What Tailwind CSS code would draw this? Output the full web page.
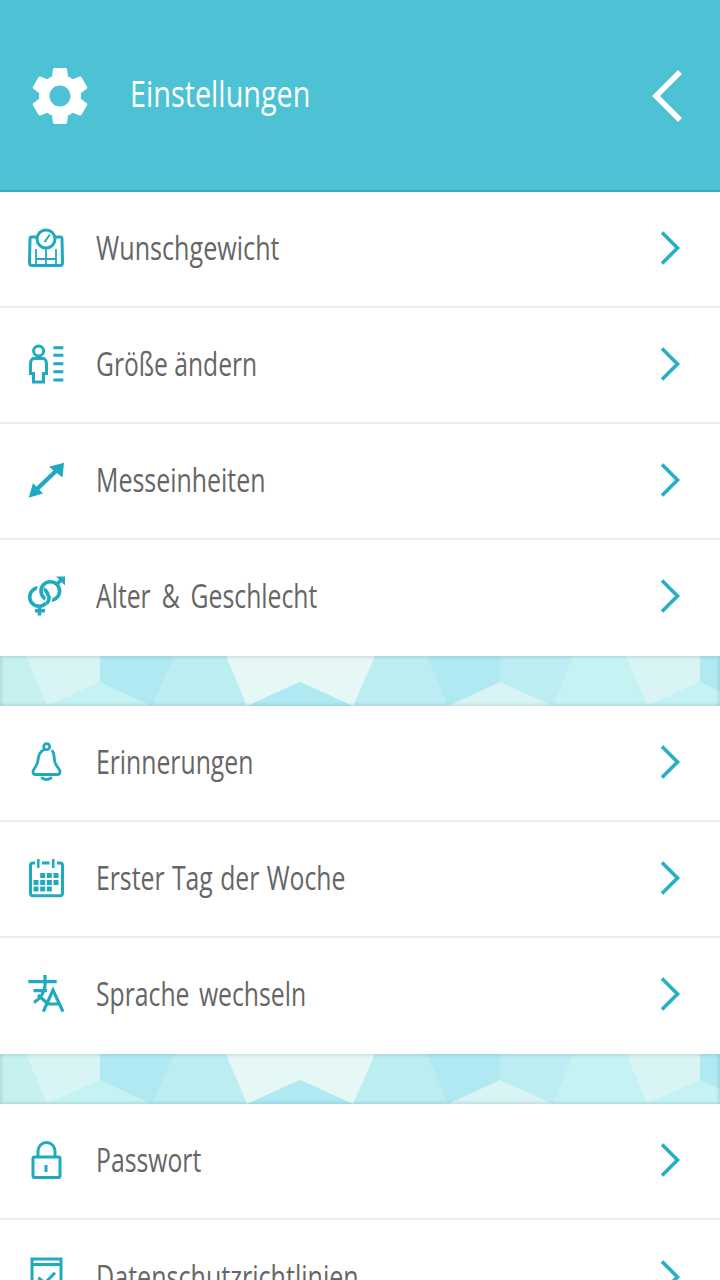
<!doctype html>
<html><head><meta charset="utf-8"><script src="https://cdn.jsdelivr.net/npm/@tailwindcss/browser@4"></script></head>
<body>
<svg class="hidden" xmlns="http://www.w3.org/2000/svg">
<symbol id="chev" viewBox="0 0 32 48"><path d="M12 8.500 L27.500 24 L12 39.500" fill="none" stroke="#25b0c6" stroke-width="3.600"/></symbol>
<symbol id="band" viewBox="0 0 720 50">
<rect width="720" height="50" fill="#bcedf2"/>
<polygon points="0,0 26,0 47,50 0,50" fill="#c5f1f1"/>
<polygon points="26,0 100,0 100,26 47,50" fill="#d9f4f4"/>
<polygon points="47,50 100,26 152,50" fill="#c5f2f2"/>
<polygon points="100,0 174,0 152,50 100,26" fill="#b0e9f2"/>
<polygon points="226,0 375,0 353,50 300,26 247,50" fill="#e5f8f5"/>
<polygon points="247,50 300,26 353,50" fill="#b0e9f2"/>
<polygon points="427,0 500,0 500,26 448,50" fill="#b0e9f2"/>
<polygon points="448,50 500,26 553,50" fill="#d9f4f4"/>
<polygon points="573,0 626,0 647,50 553,50" fill="#c5f2f2"/>
<polygon points="626,0 700,0 700,26 647,50" fill="#d9f4f4"/>
<polygon points="647,50 700,26 720,35 720,50" fill="#c5f2f2"/>
<polygon points="700,0 720,0 720,35 700,26" fill="#b0e9f2"/>
</symbol>
</svg>
<div class="w-[720px] h-[1280px] overflow-hidden bg-white font-['Open_Sans',sans-serif]">
<header class="h-[192px] bg-[#4dc2d5] border-b-2 border-[#3fa9b8] pt-[2px] flex items-center pl-[25px] pr-[35px] text-white">
<svg class="w-[70px] h-[70px]" viewBox="0 0 24 24" fill="#fff"><path d="M19.14 12.94c.04-.3.06-.61.06-.94 0-.32-.02-.64-.07-.94l2.03-1.58c.18-.14.23-.41.12-.61l-1.92-3.32c-.12-.22-.37-.29-.59-.22l-2.39.96c-.5-.38-1.03-.7-1.62-.94l-.36-2.54c-.04-.24-.24-.41-.48-.41h-3.84c-.24 0-.43.17-.47.41l-.36 2.54c-.59.24-1.13.57-1.62.94l-2.39-.96c-.22-.08-.47 0-.59.22L2.74 8.87c-.12.21-.08.47.12.61l2.03 1.58c-.05.3-.09.63-.09.94s.02.64.07.94l-2.03 1.58c-.18.14-.23.41-.12.61l1.92 3.32c.12.22.37.29.59.22l2.39-.96c.5.38 1.03.7 1.62.94l.36 2.54c.05.24.24.41.48.41h3.84c.24 0 .44-.17.47-.41l.36-2.54c.59-.24 1.13-.56 1.62-.94l2.39.96c.22.08.47 0 .59-.22l1.92-3.32c.12-.22.07-.47-.12-.61l-2.01-1.58zM12 15.6c-1.98 0-3.6-1.62-3.6-3.6s1.62-3.6 3.6-3.6 3.6 1.62 3.6 3.6-1.62 3.6-3.6 3.6z"/></svg>
<span class="ml-[35px] mb-[4px] text-[36px] inline-block origin-left scale-x-[0.8] whitespace-nowrap">Einstellungen</span>
<svg class="ml-auto w-[36px] h-[60px]" viewBox="0 0 36 60" fill="none" stroke="#fff" stroke-width="5.500"><path d="M31 6 L7 30 L31 54"/></svg>
</header>
<div class="h-[116px] border-b-2 border-[#eee] pb-[2px] flex items-center pl-[22px] pr-[38px] text-[33px] text-[#666]">
<svg class="w-[48px] h-[48px]" viewBox="0 0 48 48" fill="none" stroke="#20aabf" stroke-width="3"><path d="M15 13 H9.500 Q8 13 8 15 L7.500 38.500 Q7.500 41.500 10 41.500 H38 Q40.500 41.500 40.500 38.500 L40 15 Q40 13 38.500 13 H33"/><path stroke-width="1.800" d="M14 25 V41 M34 25 V41 M14 35 H34 M24 25 V41"/><circle cx="24" cy="15" r="9"/><path stroke-width="2" d="M22.500 18 L28 10.500"/></svg>
<span class="ml-[26px] inline-block origin-left scale-x-[0.762] whitespace-nowrap">Wunschgewicht</span><svg class="ml-auto w-[32px] h-[48px]"><use href="#chev"/></svg></div>
<div class="h-[116px] border-b-2 border-[#eee] pb-[2px] flex items-center pl-[22px] pr-[38px] text-[33px] text-[#666]">
<svg class="w-[48px] h-[48px]" viewBox="0 0 48 48" fill="none" stroke="#20aabf" stroke-width="3"><circle cx="16.600" cy="11" r="5"/><path d="M11 18.500 Q8.500 20 8.500 24 V33.500 H11.500 V42 H21.500 V33.500 H24.500 V24 Q24.500 20 22 18.500 Z"/><path d="M31.300 7.700 H41.300 M31.300 15.300 H41.300 M31.300 23.700 H41.300 M31.300 31.700 H41.300 M31.300 40 H41.300"/></svg>
<span class="ml-[26px] inline-block origin-left scale-x-[0.746] whitespace-nowrap">Größe ändern</span><svg class="ml-auto w-[32px] h-[48px]"><use href="#chev"/></svg></div>
<div class="h-[116px] border-b-2 border-[#eee] pb-[2px] flex items-center pl-[22px] pr-[38px] text-[33px] text-[#666]">
<svg class="w-[48px] h-[48px]" viewBox="0 0 48 48" fill="#20aabf"><path d="M14 34 L35 14" stroke="#20aabf" stroke-width="4.400"/><polygon points="27,10.700 42,6.700 40.500,21.500"/><polygon points="6.700,41.700 11,27 21,37.500"/></svg>
<span class="ml-[26px] inline-block origin-left scale-x-[0.755] whitespace-nowrap">Messeinheiten</span><svg class="ml-auto w-[32px] h-[48px]"><use href="#chev"/></svg></div>
<div class="h-[116px] border-b-2 border-white pb-[2px] flex items-center pl-[22px] pr-[38px] text-[33px] text-[#666]">
<svg class="w-[48px] h-[48px]" viewBox="0 0 48 48" fill="none" stroke="#20aabf" stroke-width="3.600"><circle cx="17" cy="25" r="9.300"/><path d="M18.300 19.900 A9.300 9.300 0 0 1 20.700 12.300" stroke="#fff" stroke-width="6.500"/><circle cx="28.300" cy="19" r="9.300"/><path d="M27 24.100 A9.300 9.300 0 0 1 24.600 31.700" stroke="#fff" stroke-width="6.500"/><path d="M27 24.100 A9.300 9.300 0 0 1 24.600 31.700"/><path d="M17.500 34 V43.500 M13 38.700 H23 M34 13 L40 7"/><polygon points="34,4.500 43,4.500 43,13.500" fill="#20aabf" stroke="none"/></svg>
<span class="ml-[26px] inline-block origin-left scale-x-[0.75] [word-spacing:6px] whitespace-nowrap">Alter &amp; Geschlecht</span><svg class="ml-auto w-[32px] h-[48px]"><use href="#chev"/></svg></div>
<div class="relative h-[50px]"><svg class="w-[720px] h-[50px]"><use href="#band"/></svg><div class="absolute inset-0 shadow-[inset_0_0_4px_rgba(0,60,70,0.25)]"></div></div>
<div class="h-[116px] border-b-2 border-[#eee] pb-[2px] flex items-center pl-[22px] pr-[38px] text-[33px] text-[#666]">
<svg class="w-[48px] h-[48px]" viewBox="0 0 48 48" fill="none" stroke="#20aabf" stroke-width="2.800" stroke-linecap="round"><circle cx="24.700" cy="8.700" r="3"/><path d="M21.500 12 C18 13.500 16.500 18 16 22 C15.500 28 12 30 11 33 Q11 36.500 13 36.500 H36 Q38 36.500 38 33 C37 30 33 28 32.500 22 C32 18 32 15 30.500 13"/><path d="M20 40 Q24.500 43 29 40"/></svg>
<span class="ml-[26px] inline-block origin-left scale-x-[0.75] whitespace-nowrap">Erinnerungen</span><svg class="ml-auto w-[32px] h-[48px]"><use href="#chev"/></svg></div>
<div class="h-[116px] border-b-2 border-[#eee] pb-[2px] flex items-center pl-[22px] pr-[38px] text-[33px] text-[#666]">
<svg class="w-[48px] h-[48px]" viewBox="0 0 48 48" fill="none" stroke="#20aabf" stroke-width="3"><path d="M13 9 H11 Q8.500 9 8.500 11.500 V39 Q8.500 41.700 11 41.700 H38 Q40.500 41.700 40.500 39 V11.500 Q40.500 9 38 9 H35 M20 9 H27.500"/><path stroke-width="2.500" d="M16.300 5 V14 M31.300 5 V14"/><g fill="#20aabf" stroke="none"><rect x="18.200" y="19" width="5" height="5"/><rect x="24.800" y="19" width="5" height="5"/><rect x="31.500" y="19" width="5" height="5"/><rect x="11.500" y="26" width="5" height="5"/><rect x="18.200" y="26" width="5" height="5"/><rect x="24.800" y="26" width="5" height="5"/><rect x="31.500" y="26" width="5" height="5"/><rect x="11.500" y="32.500" width="5" height="5"/><rect x="18.200" y="32.500" width="5" height="5"/><rect x="24.800" y="32.500" width="5" height="5"/></g></svg>
<span class="ml-[26px] inline-block origin-left scale-x-[0.75] [word-spacing:1.300px] whitespace-nowrap">Erster Tag der Woche</span><svg class="ml-auto w-[32px] h-[48px]"><use href="#chev"/></svg></div>
<div class="h-[116px] border-b-2 border-white pb-[2px] flex items-center pl-[22px] pr-[38px] text-[33px] text-[#666]">
<svg class="w-[48px] h-[48px]" viewBox="0 0 48 48" fill="none" stroke="#20aabf" stroke-width="3.200"><path d="M6.300 11.700 H34.700 M23 5 V12 M11.500 20.700 H25 M23.500 12 C23 20 20 28 12 32.500 M16 25 L25 33"/><path d="M21.300 41.700 L31 20 L41 41.700 M25 34 H37"/></svg>
<span class="ml-[26px] inline-block origin-left scale-x-[0.75] [word-spacing:4px] whitespace-nowrap">Sprache wechseln</span><svg class="ml-auto w-[32px] h-[48px]"><use href="#chev"/></svg></div>
<div class="relative h-[50px]"><svg class="w-[720px] h-[50px]"><use href="#band"/></svg><div class="absolute inset-0 shadow-[inset_0_0_4px_rgba(0,60,70,0.25)]"></div></div>
<div class="h-[116px] border-b-2 border-[#eee] pb-[2px] flex items-center pl-[22px] pr-[38px] text-[33px] text-[#666]">
<svg class="w-[48px] h-[48px]" viewBox="0 0 48 48" fill="none" stroke="#20aabf" stroke-width="3"><path d="M16 21 V15 A8.500 8.500 0 0 1 33 15 V21"/><rect x="11" y="21" width="27" height="20.500" rx="1.500"/><path d="M24 29 V36"/></svg>
<span class="ml-[26px] inline-block origin-left scale-x-[0.75] whitespace-nowrap">Passwort</span><svg class="ml-auto w-[32px] h-[48px]"><use href="#chev"/></svg></div>
<div class="h-[116px] pb-[2px] flex items-center pl-[22px] pr-[38px] text-[33px] text-[#666]">
<svg class="w-[48px] h-[48px]" viewBox="0 0 48 48" fill="none" stroke="#20aabf" stroke-width="3"><path d="M10 6 H39 V42 H10 Z M10 11.500 H39 M16.300 24.700 L23 30 L33 19.700"/></svg>
<span class="ml-[26px] inline-block origin-left scale-x-[0.76] whitespace-nowrap">Datenschutzrichtlinien</span><svg class="ml-auto w-[32px] h-[48px]"><use href="#chev"/></svg></div>
</div>
</body></html>
